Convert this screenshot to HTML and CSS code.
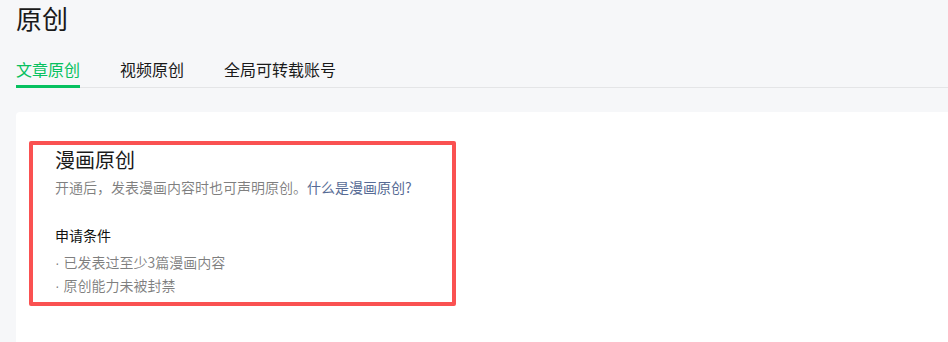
FILE: index.html
```html
<!DOCTYPE html>
<html lang="zh-CN">
<head>
<meta charset="utf-8">
<title>原创</title>
<link rel="stylesheet" href="styles.css">
</head>
<body>
<div class="page">
  <h1 class="page-title">原创</h1>
  <nav class="tabs">
    <a class="tab tab-active">文章原创</a>
    <a class="tab">视频原创</a>
    <a class="tab">全局可转载账号</a>
  </nav>
  <section class="card">
    <div class="highlight">
      <h2 class="section-title">漫画原创</h2>
      <p class="desc">开通后，发表漫画内容时也可声明原创。<a class="link">什么是漫画原创?</a></p>
      <h3 class="cond-title">申请条件</h3>
      <ul class="cond-list">
        <li><span class="dot">· </span>已发表过至少3篇漫画内容</li>
        <li><span class="dot">· </span>原创能力未被封禁</li>
      </ul>
    </div>
  </section>
</div>
</body>
</html>
```

FILE: styles.css
```css
html, body {
  margin: 0;
  padding: 0;
  height: 100%;
}
body {
  background: #f6f7f9;
  font-family: "Noto Sans CJK SC", "Noto Sans", sans-serif;
  color: rgba(0, 0, 0, 0.9);
  overflow: hidden;
}
.page {
  padding-left: 16px;
  display: flex;
  flex-direction: column;
  height: 100%;
}
.page-title {
  margin: 0;
  font-size: 26px;
  line-height: 36px;
  font-weight: 400;
  color: #1a1a1a;
}
.tabs {
  margin-top: 21px;
  display: flex;
  gap: 40px;
  border-bottom: 1px solid #e4e5e7;
}
.tab {
  font-size: 16px;
  line-height: 24px;
  padding-bottom: 4px;
  border-bottom: 3px solid transparent;
  margin-bottom: -1px;
  color: #1a1a1a;
  cursor: pointer;
}
.tab-active {
  color: #07c160;
  border-bottom-color: #07c160;
}
.card {
  margin-top: 24px;
  flex: 1;
  background: #fff;
  border-radius: 4px 0 0 0;
  padding: 29px 0 0 13px;
}
.highlight {
  width: 427px;
  box-sizing: border-box;
  border: 4px solid #fa5151;
  border-radius: 2px;
  padding: 1px 0 5px 22px;
}
.section-title {
  margin: 0 0 2px;
  font-size: 20px;
  line-height: 28px;
  font-weight: 400;
  color: #1a1a1a;
}
.desc {
  margin: 0;
  font-size: 14px;
  line-height: 22px;
  color: rgba(0, 0, 0, 0.5);
}
.link {
  color: #576b95;
  cursor: pointer;
}
.cond-title {
  margin: 26px 0 5px;
  font-size: 14px;
  line-height: 22px;
  font-weight: 400;
  color: #111;
}
.cond-list {
  margin: 0;
  padding: 0;
  list-style: none;
  font-size: 14px;
  line-height: 22px;
  color: rgba(0, 0, 0, 0.5);
}
.dot {
  font-family: "Liberation Sans", sans-serif;
}
```
